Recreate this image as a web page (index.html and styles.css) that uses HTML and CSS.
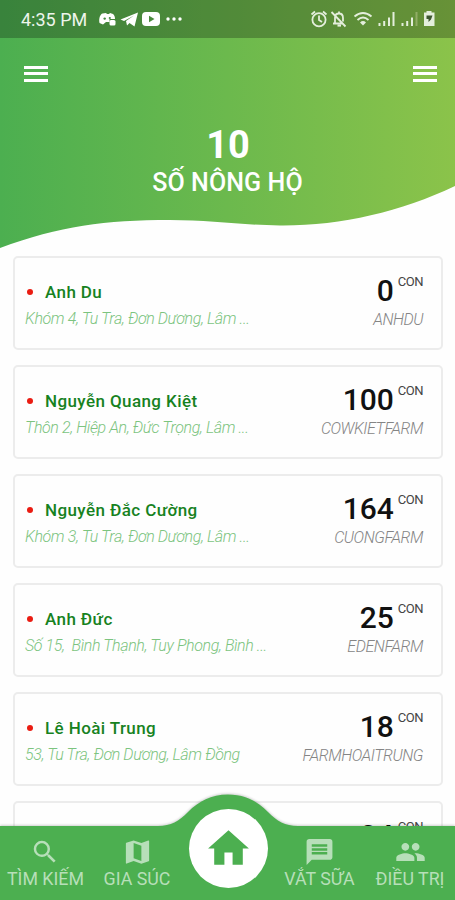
FILE: index.html
```html
<!DOCTYPE html>
<html lang="vi">
	<head>
		<meta charset="utf-8">
		<title>Số nông hộ</title>
		<link rel="stylesheet" href="styles.css">
	</head>
	<body>
		<div class="app">
			<div class="header">
				<svg class="wave" viewBox="0 0 455 250" width="455" height="250">
					<defs>
						<linearGradient id="green" x1="0" y1="0" x2="1" y2="0">
							<stop offset="0" stop-color="#4caf50"/>
							<stop offset="1" stop-color="#8bc34a"/>
						</linearGradient>
					</defs>
					<path fill="url(#green)" d="M0 0H455V186C400 212 340 226 280 225.500C240 225 210 220 170 220C105 220 60 226 0 248Z"/>
				</svg>
				<div class="status">
					<span class="time">4:35 PM</span>
					<svg class="apps" viewBox="0 0 86 20" width="86" height="20" fill="#fff">
						<path d="M1.500 14C.5 9 2.500 5 4.500 4.500L8 4L9 5H11L12 4L15 5C16.500 6 17 8 17 10H11.500V13H8L5 15.500Z"/>
						<rect x="11.500" y="11" width="6" height="5.500" rx="1.500"/>
						<circle cx="6.700" cy="9.600" r="1.200" fill="#438a40"/>
						<circle cx="11.800" cy="9" r="1.100" fill="#438a40"/>
						<path d="M22.500 10.500L40 3.500L36.500 17.500L31.500 14L29 16.500L28 12L36 6.500L26 12Z"/>
						<rect x="44" y="3" width="18" height="14" rx="4"/>
						<path fill="#498a3c" d="M51 6.800L56.500 10L51 13.200Z"/>
						<circle cx="70" cy="10" r="1.700"/>
						<circle cx="76" cy="10" r="1.700"/>
						<circle cx="82" cy="10" r="1.700"/>
					</svg>
					<svg class="signals" viewBox="0 0 128 20" width="128" height="20" fill="none" stroke="#e4eedc" stroke-width="1.800">
						<circle cx="9" cy="10.800" r="6.600"/>
						<path d="M9 6.500V11L12 13M1.500 5.500L5 2.500M16.500 5.500L13 2.500"/>
						<path d="M23 14.500H33M25 14.500V8.500Q25 4.500 29 4.500Q33 4.500 33 9V12.500M29 2.500V5M21.500 3L35.500 17.500"/>
						<path stroke-width="2.200" d="M27.500 16.500H31"/>
						<path d="M44.500 7.500Q53 .5 61.500 7.500M47.500 11Q53 6 58.500 11"/>
						<path d="M50 13.500Q53 10.700 56 13.500L53 16.500Z" fill="#e4eedc" stroke="none"/>
						<path stroke-width="2" d="M69.500 14V17M74.200 12V17M79 8.500V17M83.500 3V17M92.500 14V17M97.200 12V17M102 8.500V17"/>
						<path stroke="#91ad66" stroke-width="2" d="M106.500 3V17"/>
						<path fill="#e4eedc" stroke="none" d="M116.500 2H121.500V3.500H124.500V17H114V3.500H116.500Z"/>
						<path fill="#3d5730" stroke="none" d="M116.500 6.500H122.500L121 10.500L118.500 13V10H116.500Z"/>
					</svg>
				</div>
				<div class="menus">
					<span class="menu"><i></i><i></i><i></i></span>
					<span class="menu"><i></i><i></i><i></i></span>
				</div>
				<div class="total">10</div>
				<div class="title">SỐ NÔNG HỘ</div>
			</div>

			<ul class="list">
				<li>
					<div class="info">
						<p class="name">Anh Du</p>
						<p class="address">Khóm 4, Tu Tra, Đơn Dương, Lâm ...</p>
					</div>
					<div class="count">
						<p class="num">0<sup>CON</sup></p>
						<p class="code">ANHDU</p>
					</div>
				</li>
				<li>
					<div class="info">
						<p class="name">Nguyễn Quang Kiệt</p>
						<p class="address">Thôn 2, Hiệp An, Đức Trọng, Lâm ...</p>
					</div>
					<div class="count">
						<p class="num">100<sup>CON</sup></p>
						<p class="code">COWKIETFARM</p>
					</div>
				</li>
				<li>
					<div class="info">
						<p class="name">Nguyễn Đắc Cường</p>
						<p class="address">Khóm 3, Tu Tra, Đơn Dương, Lâm ...</p>
					</div>
					<div class="count">
						<p class="num">164<sup>CON</sup></p>
						<p class="code">CUONGFARM</p>
					</div>
				</li>
				<li>
					<div class="info">
						<p class="name">Anh Đức</p>
						<p class="address">Số 15,&nbsp; Bình Thạnh, Tuy Phong, Bình ...</p>
					</div>
					<div class="count">
						<p class="num">25<sup>CON</sup></p>
						<p class="code">EDENFARM</p>
					</div>
				</li>
				<li>
					<div class="info">
						<p class="name">Lê Hoài Trung</p>
						<p class="address">53, Tu Tra, Đơn Dương, Lâm Đồng</p>
					</div>
					<div class="count">
						<p class="num">18<sup>CON</sup></p>
						<p class="code">FARMHOAITRUNG</p>
					</div>
				</li>
				<li>
					<div class="count">
						<p class="num">24<sup>CON</sup></p>
					</div>
				</li>
			</ul>

			<div class="nav">
				<svg class="nav-bg" viewBox="0 0 455 110" width="455" height="110">
					<path fill="#4caf50" d="M0 36H158C171 36 179 31 188 22C199 11 211 4.500 228 4.500C245 4.500 257 11 268 22C277 31 285 36 298 36H455V110H0Z"/>
				</svg>
				<a class="tab">
					<svg viewBox="0 0 24 24" width="30" height="30"><path d="M15.500 14h-.79l-.28-.27A6.470 6.470 0 0 0 16 9.500 6.500 6.500 0 1 0 9.500 16c1.610 0 3.090-.59 4.230-1.570l.27.28v.79l5 4.990L20.490 19l-4.990-5zm-6 0C7.010 14 5 11.990 5 9.500S7.010 5 9.500 5 14 7.010 14 9.500 11.990 14 9.500 14z"/></svg>
					<span>TÌM KIẾM</span>
				</a>
				<a class="tab">
					<svg viewBox="0 0 24 24" width="31" height="31"><path d="M20.500 3l-.16.03L15 5.100 9 3 3.360 4.900c-.21.07-.36.25-.36.48V20.500c0 .28.22.5.5.5l.16-.03L9 18.900l6 2.100 5.640-1.900c.21-.07.36-.25.36-.48V3.500c0-.28-.22-.5-.5-.5zM15 19l-6-2.110V5l6 2.110V19z"/></svg>
					<span>GIA SÚC</span>
				</a>
				<a class="home">
					<svg viewBox="0 0 24 24" width="49" height="49"><path d="M10 20v-6h4v6h5v-8h3L12 3 2 12h3v8z"/></svg>
				</a>
				<a class="tab">
					<svg viewBox="0 0 24 24" width="31" height="31"><path d="M20 2H4c-1.100 0-1.990.9-1.990 2L2 22l4-4h14c1.100 0 2-.9 2-2V4c0-1.100-.9-2-2-2zM6 9h12v2H6V9zm12 5H6v-2h12v2zm0-6H6V6h12v2z"/></svg>
					<span>VẮT SỮA</span>
				</a>
				<a class="tab">
					<svg viewBox="0 0 24 24" width="31" height="31"><path d="M16 11c1.660 0 2.990-1.340 2.990-3S17.660 5 16 5s-3 1.340-3 3 1.340 3 3 3zm-8 0c1.660 0 2.990-1.340 2.990-3S9.660 5 8 5 5 6.340 5 8s1.340 3 3 3zm0 2c-2.330 0-7 1.170-7 3.500V19h14v-2.500c0-2.330-4.670-3.500-7-3.500zm8 0c-.29 0-.62.020-.97.050 1.160.84 1.970 1.970 1.970 3.450V19h6v-2.500c0-2.330-4.670-3.500-7-3.500z"/></svg>
					<span>ĐIỀU TRỊ</span>
				</a>
			</div>
		</div>
	</body>
</html>
```

FILE: styles.css
```css
*{
    padding:0;
    margin:0;
    box-sizing:border-box;
    list-style:none;
}
body{
    font-family:Roboto, "Noto Sans", sans-serif;
    background:#fefefe;
}
.app{
    width:455px;
    height:900px;
    position:relative;
    overflow:hidden;
}
.header{
    height:256px;
    position:relative;
    color:#fff;
    text-align:center;
}
.wave{
    position:absolute;
    left:0;
    top:0;
    z-index:-1;
}
.status{
    height:38px;
    padding:0 17px 0 21px;
    display:flex;
    align-items:center;
    background:rgba(0,0,0,.25);
}
.time{
    width:77px;
    font-size:18px;
    line-height:38px;
    padding-top:2px;
    text-align:left;
    white-space:nowrap;
    color:#eef5ec;
}
.signals{
    margin-left:auto;
}
.menus{
    height:71px;
    padding:0 18px 0 24px;
    display:flex;
    justify-content:space-between;
    align-items:center;
}
.menu{
    width:24px;
    display:flex;
    flex-direction:column;
    gap:3.500px;
}
.menu i{
    height:3px;
    background:#fff;
}
.total{
    margin-top:13px;
    font-size:38px;
    line-height:46px;
    font-weight:bold;
    padding-left:1px;
}
.title{
    font-size:25px;
    line-height:30px;
    font-weight:500;
    letter-spacing:.1px;
}
.list li{
    width:430px;
    height:94px;
    margin:0 0 15px 13px;
    padding:15px 18px 0 11px;
    display:flex;
    border:2px solid #ececec;
    border-radius:5px;
}
.name{
    margin-top:7px;
    font-size:17px;
    line-height:24px;
    font-weight:500;
    letter-spacing:.4px;
    color:#17821f;
    display:flex;
    align-items:center;
}
.name::before{
    content:"";
    width:6px;
    height:6px;
    margin:0 12px 0 1px;
    border-radius:50%;
    background:#ea1c12;
}
.address{
    margin-left:-1px;
    padding-top:3px;
    font-size:16px;
    line-height:24px;
    font-weight:300;
    font-style:italic;
    letter-spacing:-.39px;
    white-space:pre;
    color:#7cc47f;
}
.count{
    margin-left:auto;
    text-align:right;
}
.num{
    height:35px;
    font-size:30px;
    line-height:35px;
    font-weight:500;
    color:#111;
    display:flex;
    justify-content:flex-end;
}
.num sup{
    margin-left:4px;
    font-size:13px;
    line-height:18px;
    font-weight:400;
    letter-spacing:-.5px;
    color:#444;
}
.code{
    font-size:16px;
    line-height:24px;
    font-weight:300;
    font-style:italic;
    letter-spacing:-.45px;
    color:#858585;
}
.nav{
    position:absolute;
    left:0;
    bottom:0;
    width:455px;
    height:110px;
    padding-top:46px;
    display:grid;
    grid-template-columns:91px 92px 91px 91px 90px;
    justify-items:center;
    align-items:start;
}
.nav-bg{
    position:absolute;
    left:0;
    top:0;
    filter:drop-shadow(0 -1px 1px rgba(0,0,0,.18));
}
.tab{
    position:relative;
    display:flex;
    flex-direction:column;
    align-items:center;
    color:#b7dfb9;
    font-size:17.800px;
    line-height:22px;
    white-space:nowrap;
}
.tab svg{
    height:32px;
    fill:#b7dfb9;
}
.home{
    position:relative;
    width:79px;
    height:79px;
    margin-top:-27px;
    display:flex;
    align-items:center;
    justify-content:center;
    border-radius:50%;
    background:#fff;
}
.home svg{
    fill:#4caf50;
}
```
